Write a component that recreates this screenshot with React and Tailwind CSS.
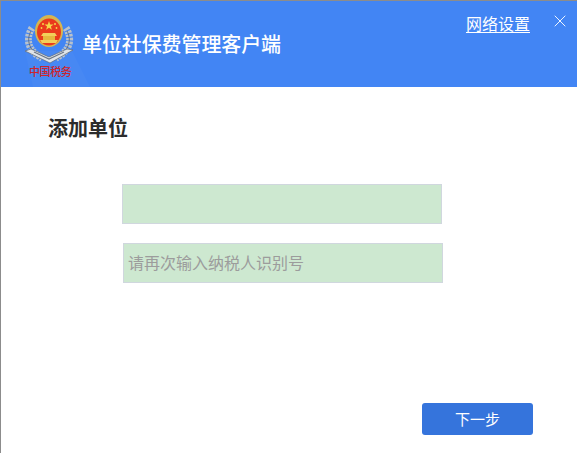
import { X } from 'lucide-react'

const cjk = { fontFamily: '"Noto Sans CJK SC", sans-serif' }

function Emblem() {
  return (
    <div className="relative w-[50px] h-[64px] shrink-0">
      <svg width="50" height="50" viewBox="0 0 50 50">
        {/* grey wreath */}
        <path d="M7 13 C0 24 3 36 17 43" fill="none" stroke="#b9c2cc" strokeWidth="7" strokeDasharray="2.5 1" />
        <path d="M41 13 C48 24 45 36 31 43" fill="none" stroke="#b9c2cc" strokeWidth="7" strokeDasharray="2.5 1" />
        <path d="M6 16 C1 25 4 36 17 43" fill="none" stroke="#56606e" strokeWidth="0.8" />
        <path d="M42 16 C47 25 44 36 31 43" fill="none" stroke="#56606e" strokeWidth="0.8" />
        {/* chevron band */}
        <path d="M0 36 L6 34 L24 42 L42 34 L48 35 L25 48 Z" fill="#dfe4e9" stroke="#5e6a78" strokeWidth="0.7" />
        <path d="M9 37 L24 44 L39 37" fill="none" stroke="#6d7785" strokeWidth="1.2" />
        {/* gold ring and red disc */}
        <ellipse cx="24" cy="16" rx="14" ry="16" fill="#d6b550" />
        <ellipse cx="24" cy="17" rx="12" ry="13.5" fill="#ea3a1c" />
        {/* stars */}
        <path d="M24 6 L25.2 9.4 L28.6 9.4 L25.9 11.5 L26.9 14.8 L24 12.8 L21.1 14.8 L22.1 11.5 L19.4 9.4 L22.8 9.4 Z" fill="#f6d64a" />
        <circle cx="18" cy="9" r="1" fill="#f6d64a" />
        <circle cx="30" cy="9" r="1" fill="#f6d64a" />
        <circle cx="16.5" cy="13" r="0.9" fill="#f6d64a" />
        <circle cx="31.5" cy="13" r="0.9" fill="#f6d64a" />
        {/* gate */}
        <path d="M18 18 L30 18 L32 21 L16 21 Z" fill="#f2cf5a" />
        <path d="M18 21 H30 V25 H18 Z" fill="#e6b83e" />
        <path d="M15 25 H33 L31 28 H17 Z" fill="#f2cf5a" />
      </svg>
      <span className="absolute left-[4px] top-[48px] whitespace-nowrap text-[11px] leading-[16px] font-medium text-[#d0242a] tracking-[-0.4px]">
        中国税务
      </span>
    </div>
  )
}

export default function App() {
  return (
    <div className="w-[577px] h-[453px] bg-white border-t border-l border-[#8c8c8c] flex flex-col overflow-hidden" style={cjk}>
      {/* header */}
      <div className="relative h-[86px] shrink-0 bg-[#4285f4] flex items-start">
        <svg className="absolute left-[24px] bottom-0" width="66" height="36" viewBox="0 0 66 36">
          <path d="M8 36 L0 0 L47 0 L65 36 Z" fill="#4788f3" />
        </svg>
        <div className="relative ml-[24px] mt-[14px]">
          <Emblem />
        </div>
        <h1 className="relative ml-[7px] mt-[29px] text-[20px] leading-[28px] font-medium tracking-[-0.1px] text-white whitespace-nowrap">单位社保费管理客户端</h1>
        <a className="ml-auto mt-[10px] text-[16px] leading-[24px] text-white underline underline-offset-2 whitespace-nowrap">网络设置</a>
        <button className="ml-[20px] mr-[7px] mt-[10px] text-white">
          <X size={20} strokeWidth={1.1} />
        </button>
      </div>

      {/* body */}
      <div className="flex-1 flex flex-col">
        <h2 className="ml-[47px] mt-[26px] text-[20px] leading-[30px] font-bold text-[#2c2c2c]">添加单位</h2>
        <input className="block ml-[121px] mt-[41px] w-[320px] h-[40px] px-[4px] bg-[#cde8d0] border border-[#d0d7de] outline-none text-[16px]" />
        <input
          placeholder="请再次输入纳税人识别号"
          className="block ml-[122px] mt-[19px] w-[320px] h-[40px] pl-[4px] pr-[4px] pb-[2px] bg-[#cde8d0] border border-[#d0d7de] outline-none text-[16px] placeholder:text-[#9c9c9c]"
        />
        <div className="mt-[120px] ml-[421px]">
          <button className="w-[111px] h-[32px] rounded-[3px] bg-[#3574dc] text-white text-[15px]">下一步</button>
        </div>
      </div>
    </div>
  )
}
